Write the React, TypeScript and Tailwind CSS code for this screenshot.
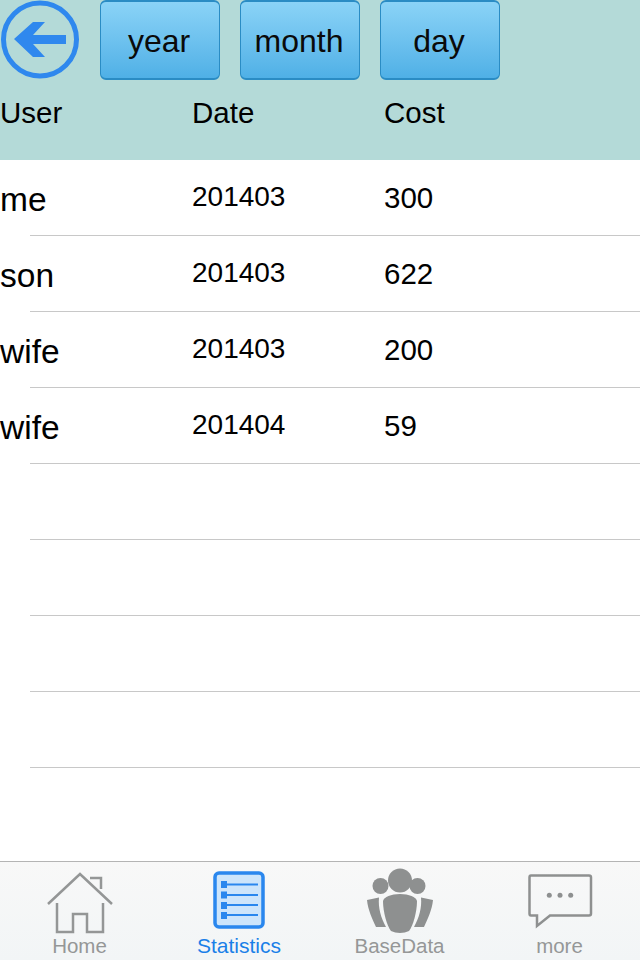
const rows = [
  { user: 'me', date: '201403', cost: '300' },
  { user: 'son', date: '201403', cost: '622' },
  { user: 'wife', date: '201403', cost: '200' },
  { user: 'wife', date: '201404', cost: '59' },
  null,
  null,
  null,
  null,
];

function FilterButton({ label }: { label: string }) {
  return (
    <button className="w-[120px] h-20 rounded-[6px] border border-[#2a8cc4] border-t-2 border-b-2 bg-gradient-to-b from-[#8ad3f7] to-[#4fb0e6] text-[32px] text-[#0a0a0a] leading-none pt-[2px] pr-[2px]">
      {label}
    </button>
  );
}

function HomeIcon() {
  return (
    <svg width="66" height="62" viewBox="0 0 66 62" fill="none" stroke="#949696" strokeWidth="2.500">
      <path d="M1 32 L33 2 L65 32" />
      <path d="M43 6 H54 V17" />
      <path d="M10 31 V60 H26 V42 H40 V60 H56 V31" />
    </svg>
  );
}

function ListIcon() {
  return (
    <svg width="52" height="58" viewBox="0 0 52 58" fill="none">
      <rect x="2" y="2" width="48" height="54" rx="4" fill="#cde5fb" stroke="#2a87ee" strokeWidth="3.500" />
      <g fill="#2a87ee">
        <rect x="8" y="10" width="6" height="7" />
        <rect x="8" y="20.500" width="6" height="7" />
        <rect x="8" y="31" width="6" height="7" />
        <rect x="8" y="41" width="6" height="7" />
      </g>
      <g stroke="#2a87ee" strokeWidth="2">
        <path d="M14 13.500 H45" />
        <path d="M14 24 H45" />
        <path d="M14 34 H45" />
        <path d="M14 44 H45" />
      </g>
    </svg>
  );
}

function PeopleIcon() {
  return (
    <svg width="66" height="66" viewBox="0 0 66 66" fill="#8e9090">
      <circle cx="33" cy="12.500" r="12" />
      <circle cx="13.500" cy="18" r="8" />
      <circle cx="50.500" cy="18" r="8" />
      <path d="M33 26 C42 26 49 29 50 33 C50 44 46 58 42 63 Q38 65 33 65 Q28 65 24 63 C20 58 16 44 16 33 C17 29 24 26 33 26 Z" />
      <path d="M0 32 L12 29.500 C11 40 14 50 19 59 H9 C5 50 1 42 0 32 Z" />
      <path d="M66 32 L54 29.500 C55 40 52 50 47 59 H57 C61 50 65 42 66 32 Z" />
    </svg>
  );
}

function MoreIcon() {
  return (
    <svg width="66" height="56" viewBox="0 0 66 56" fill="none">
      <path
        d="M4 2.500 H62 Q64 2.500 64 4.500 V40.500 Q64 42.500 62 42.500 H23 L10 53 V42.500 H4 Q2.500 42.500 2.500 40.500 V4.500 Q2.500 2.500 4 2.500 Z"
        stroke="#8e9090"
        strokeWidth="2.500"
      />
      <circle cx="22.300" cy="22.300" r="2.500" fill="#8e9090" />
      <circle cx="33" cy="22.300" r="2.500" fill="#8e9090" />
      <circle cx="43.700" cy="22.300" r="2.500" fill="#8e9090" />
    </svg>
  );
}

export default function App() {
  return (
    <div className="w-[640px] h-[960px] flex flex-col bg-white text-black font-['Liberation_Sans',Arial,sans-serif] overflow-hidden">
      <div className="h-40 shrink-0 bg-[#b4dad8]">
        <div className="flex items-center h-20 gap-5">
          <svg width="80" height="80" viewBox="0 0 80 80" fill="none">
            <circle cx="40" cy="39.500" r="36.500" stroke="#2f88ee" strokeWidth="5" />
            <path d="M14 39 L33 22 H45 L33 35 H66 V44 H33 L45 57 H33 Z" fill="#2f88ee" />
          </svg>
          <FilterButton label="year" />
          <FilterButton label="month" />
          <FilterButton label="day" />
        </div>
        <div className="grid grid-cols-[192px_192px_1fr] text-[29.5px] leading-none mt-4 pt-[2px]">
          <span>User</span>
          <span>Date</span>
          <span>Cost</span>
        </div>
      </div>

      <div className="flex-1">
        {rows.map((row, i) => (
          <div key={i} className="relative h-[76px] grid grid-cols-[192px_192px_1fr] items-center pb-1">
            {row && (
              <>
                <span className="text-[33.5px] leading-none pt-[7px]">{row.user}</span>
                <span className="text-[28px] leading-none pt-[2px]">{row.date}</span>
                <span className="text-[29.5px] leading-none pt-[3px]">{row.cost}</span>
              </>
            )}
            <div className="absolute left-[30px] right-0 bottom-0 h-px bg-[#c8c8c8]" />
          </div>
        ))}
      </div>

      <div className="h-[99px] shrink-0 border-t border-[#b4b4b4] bg-gradient-to-b from-[#f8f8f8] to-[#f2f5f6] grid grid-cols-4">
        <div className="flex flex-col items-center justify-end pb-1">
          <HomeIcon />
          <span className="text-[20.5px] leading-none text-[#959797] mt-[2px] mr-px">Home</span>
        </div>
        <div className="flex flex-col items-center justify-end pb-1">
          <div className="mr-[2px] flex">
            <ListIcon />
          </div>
          <span className="text-[21px] leading-none text-[#1a7fe8] mt-[6px] mr-[2px]">Statistics</span>
        </div>
        <div className="flex flex-col items-center justify-end pb-1">
          <PeopleIcon />
          <span className="text-[20.5px] leading-none text-[#959797] mt-[2px] mr-px">BaseData</span>
        </div>
        <div className="flex flex-col items-center justify-end pb-1">
          <MoreIcon />
          <span className="text-[20.5px] leading-none text-[#959797] mt-[7px] mr-px">more</span>
        </div>
      </div>
    </div>
  );
}
